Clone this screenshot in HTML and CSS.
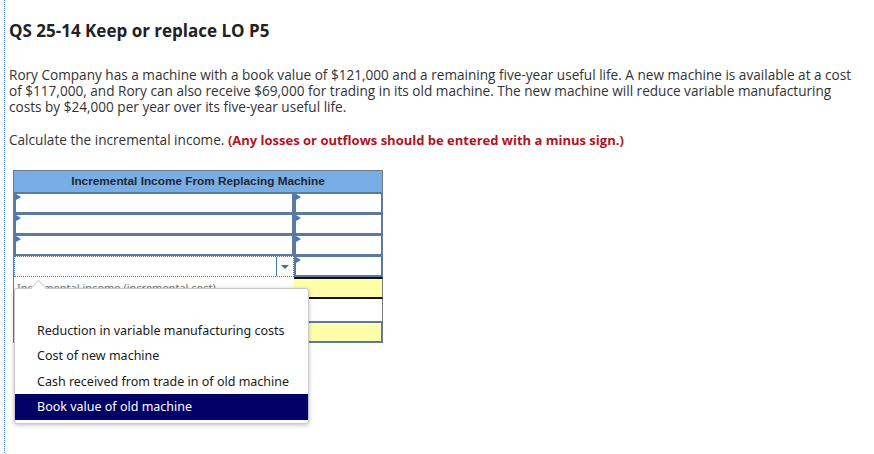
FILE: index.html
```html
<!DOCTYPE html>
<html>
<head>
<meta charset="utf-8">
<link rel="stylesheet" href="styles.css">
</head>
<body>
<div class="page">
  <h1 class="title">QS 25-14 Keep or replace LO P5</h1>
  <p class="text">Rory Company has a machine with a book value of $121,000 and a remaining five-year useful life. A new machine is available at a cost of $117,000, and Rory can also receive $69,000 for trading in its old machine. The new machine will reduce variable manufacturing costs by $24,000 per year over its five-year useful life.</p>
  <p class="text">Calculate the incremental income. <strong class="warn">(Any losses or outflows should be entered with a minus sign.)</strong></p>

  <div class="qtable">
    <div class="thead">Incremental Income From Replacing Machine</div>
    <div class="row">
      <div class="cell left input"><span class="mark"></span></div>
      <div class="cell right input"><span class="mark"></span></div>
    </div>
    <div class="row">
      <div class="cell left input"><span class="mark"></span></div>
      <div class="cell right input"><span class="mark"></span></div>
    </div>
    <div class="row">
      <div class="cell left input"><span class="mark"></span></div>
      <div class="cell right input"><span class="mark"></span></div>
    </div>
    <div class="row">
      <div class="cell left select"><span class="arrowbox"><span class="arrow"></span></span></div>
      <div class="cell right input"><span class="mark"></span></div>
    </div>
    <div class="row tall">
      <div class="cell left label">Incremental income (incremental cost)</div>
      <div class="cell right total"></div>
    </div>
    <div class="row tall">
      <div class="cell left blank"></div>
      <div class="cell right plain"></div>
    </div>
    <div class="row tall">
      <div class="cell left blank"></div>
      <div class="cell right yellowbox"></div>
    </div>

    <div class="popup">
      <span class="notch"></span>
      <ul class="options">
        <li class="opt empty">&nbsp;</li>
        <li class="opt">Reduction in variable manufacturing costs</li>
        <li class="opt">Cost of new machine</li>
        <li class="opt">Cash received from trade in of old machine</li>
        <li class="opt selected">Book value of old machine</li>
      </ul>
    </div>
  </div>
</div>
</body>
</html>
```
FILE: styles.css
```css
html, body {
  margin: 0;
  padding: 0;
  background: #ffffff;
}
.page {
  margin-left: 4px;
  border-left: 1px dotted #3a7fd4;
  padding: 21px 0 0 4px;
  min-height: 440px;
  width: 855px;
  font-family: "Open Sans", "Liberation Sans", sans-serif;
  color: #333333;
}
.title {
  margin: 0 0 26px 0;
  font-size: 17px;
  line-height: 20px;
  font-weight: 700;
  color: #222222;
}
.text {
  margin: 0 0 17px 0;
  font-size: 13.6px;
  line-height: 16px;
  width: 850px;
}
.warn {
  color: #b0141e;
  font-weight: 700;
  font-size: 13px;
}
.qtable {
  position: relative;
  margin: 22px 0 0 4px;
  width: 370px;
  font-family: "Liberation Sans", Arial, sans-serif;
}
.thead {
  height: 21px;
  line-height: 21px;
  background: #79ade6;
  border: 1px solid #6e7986;
  text-align: center;
  font-size: 11.8px;
  font-weight: 700;
  color: #23272e;
}
.row {
  display: flex;
  height: 21px;
  border-left: 1px solid #7a7a7a;
}
.row.tall {
  height: 22px;
}
.cell {
  position: relative;
  box-sizing: border-box;
  height: 100%;
}
.left {
  width: 280px;
}
.right {
  width: 89px;
  border-right: 1px solid #7a7a7a;
}
.input {
  background: #ffffff;
  border: 2px solid #5c7aa0;
  margin-top: -1px;
  height: calc(100% + 1px);
}
.right.input {
  border-left: 2px solid #5c7aa0;
}
.mark {
  position: absolute;
  left: 0;
  top: 0;
  width: 0;
  height: 0;
  border-top: 3px solid transparent;
  border-bottom: 3px solid transparent;
  border-left: 5px solid #3d78c8;
}
.select {
  border: 1px dotted #3a6fc4;
  background: #ffffff;
}
.arrowbox {
  position: absolute;
  right: 0;
  top: 0;
  bottom: 0;
  width: 16px;
  border-left: 1px solid #4a79b8;
  display: flex;
  align-items: center;
  justify-content: center;
}
.arrow {
  width: 0;
  height: 0;
  border-left: 4px solid transparent;
  border-right: 4px solid transparent;
  border-top: 4px solid #3d6fae;
}
.label {
  font-family: "Noto Sans", "DejaVu Sans", sans-serif;
  font-size: 11px;
  color: #777777;
  padding: 3px 0 0 3px;
  white-space: nowrap;
  overflow: hidden;
}
.total {
  background: #ffffaa;
  border-top: 2px solid #111111;
  border-bottom: 2px solid #111111;
}
.plain {
  background: #ffffff;
}
.yellowbox {
  background: #ffffaa;
  border: 2px solid #5c7aa0;
}
.blank {
  background: #ffffff;
}
.popup {
  position: absolute;
  left: 1px;
  top: 118px;
  width: 295px;
  height: 136px;
  background: #ffffff;
  border: 1px solid #c8c8c8;
  border-radius: 3px;
  box-shadow: 0 1px 4px rgba(0, 0, 0, 0.25);
  box-sizing: border-box;
}
.notch {
  position: absolute;
  left: 18px;
  top: -7px;
  width: 10px;
  height: 10px;
  background: #ffffff;
  border-left: 1px solid #d0d0d0;
  border-top: 1px solid #d0d0d0;
  transform: rotate(45deg);
}
.options {
  list-style: none;
  margin: 0;
  padding: 3px 0 0 0;
  position: relative;
}
.opt {
  height: 25.5px;
  line-height: 25.5px;
  padding-left: 22px;
  font-family: "Noto Sans", "DejaVu Sans", sans-serif;
  font-size: 12.5px;
  color: #1a1a1a;
  white-space: nowrap;
}
.opt.selected {
  background: #000066;
  color: #ffffff;
}
```
